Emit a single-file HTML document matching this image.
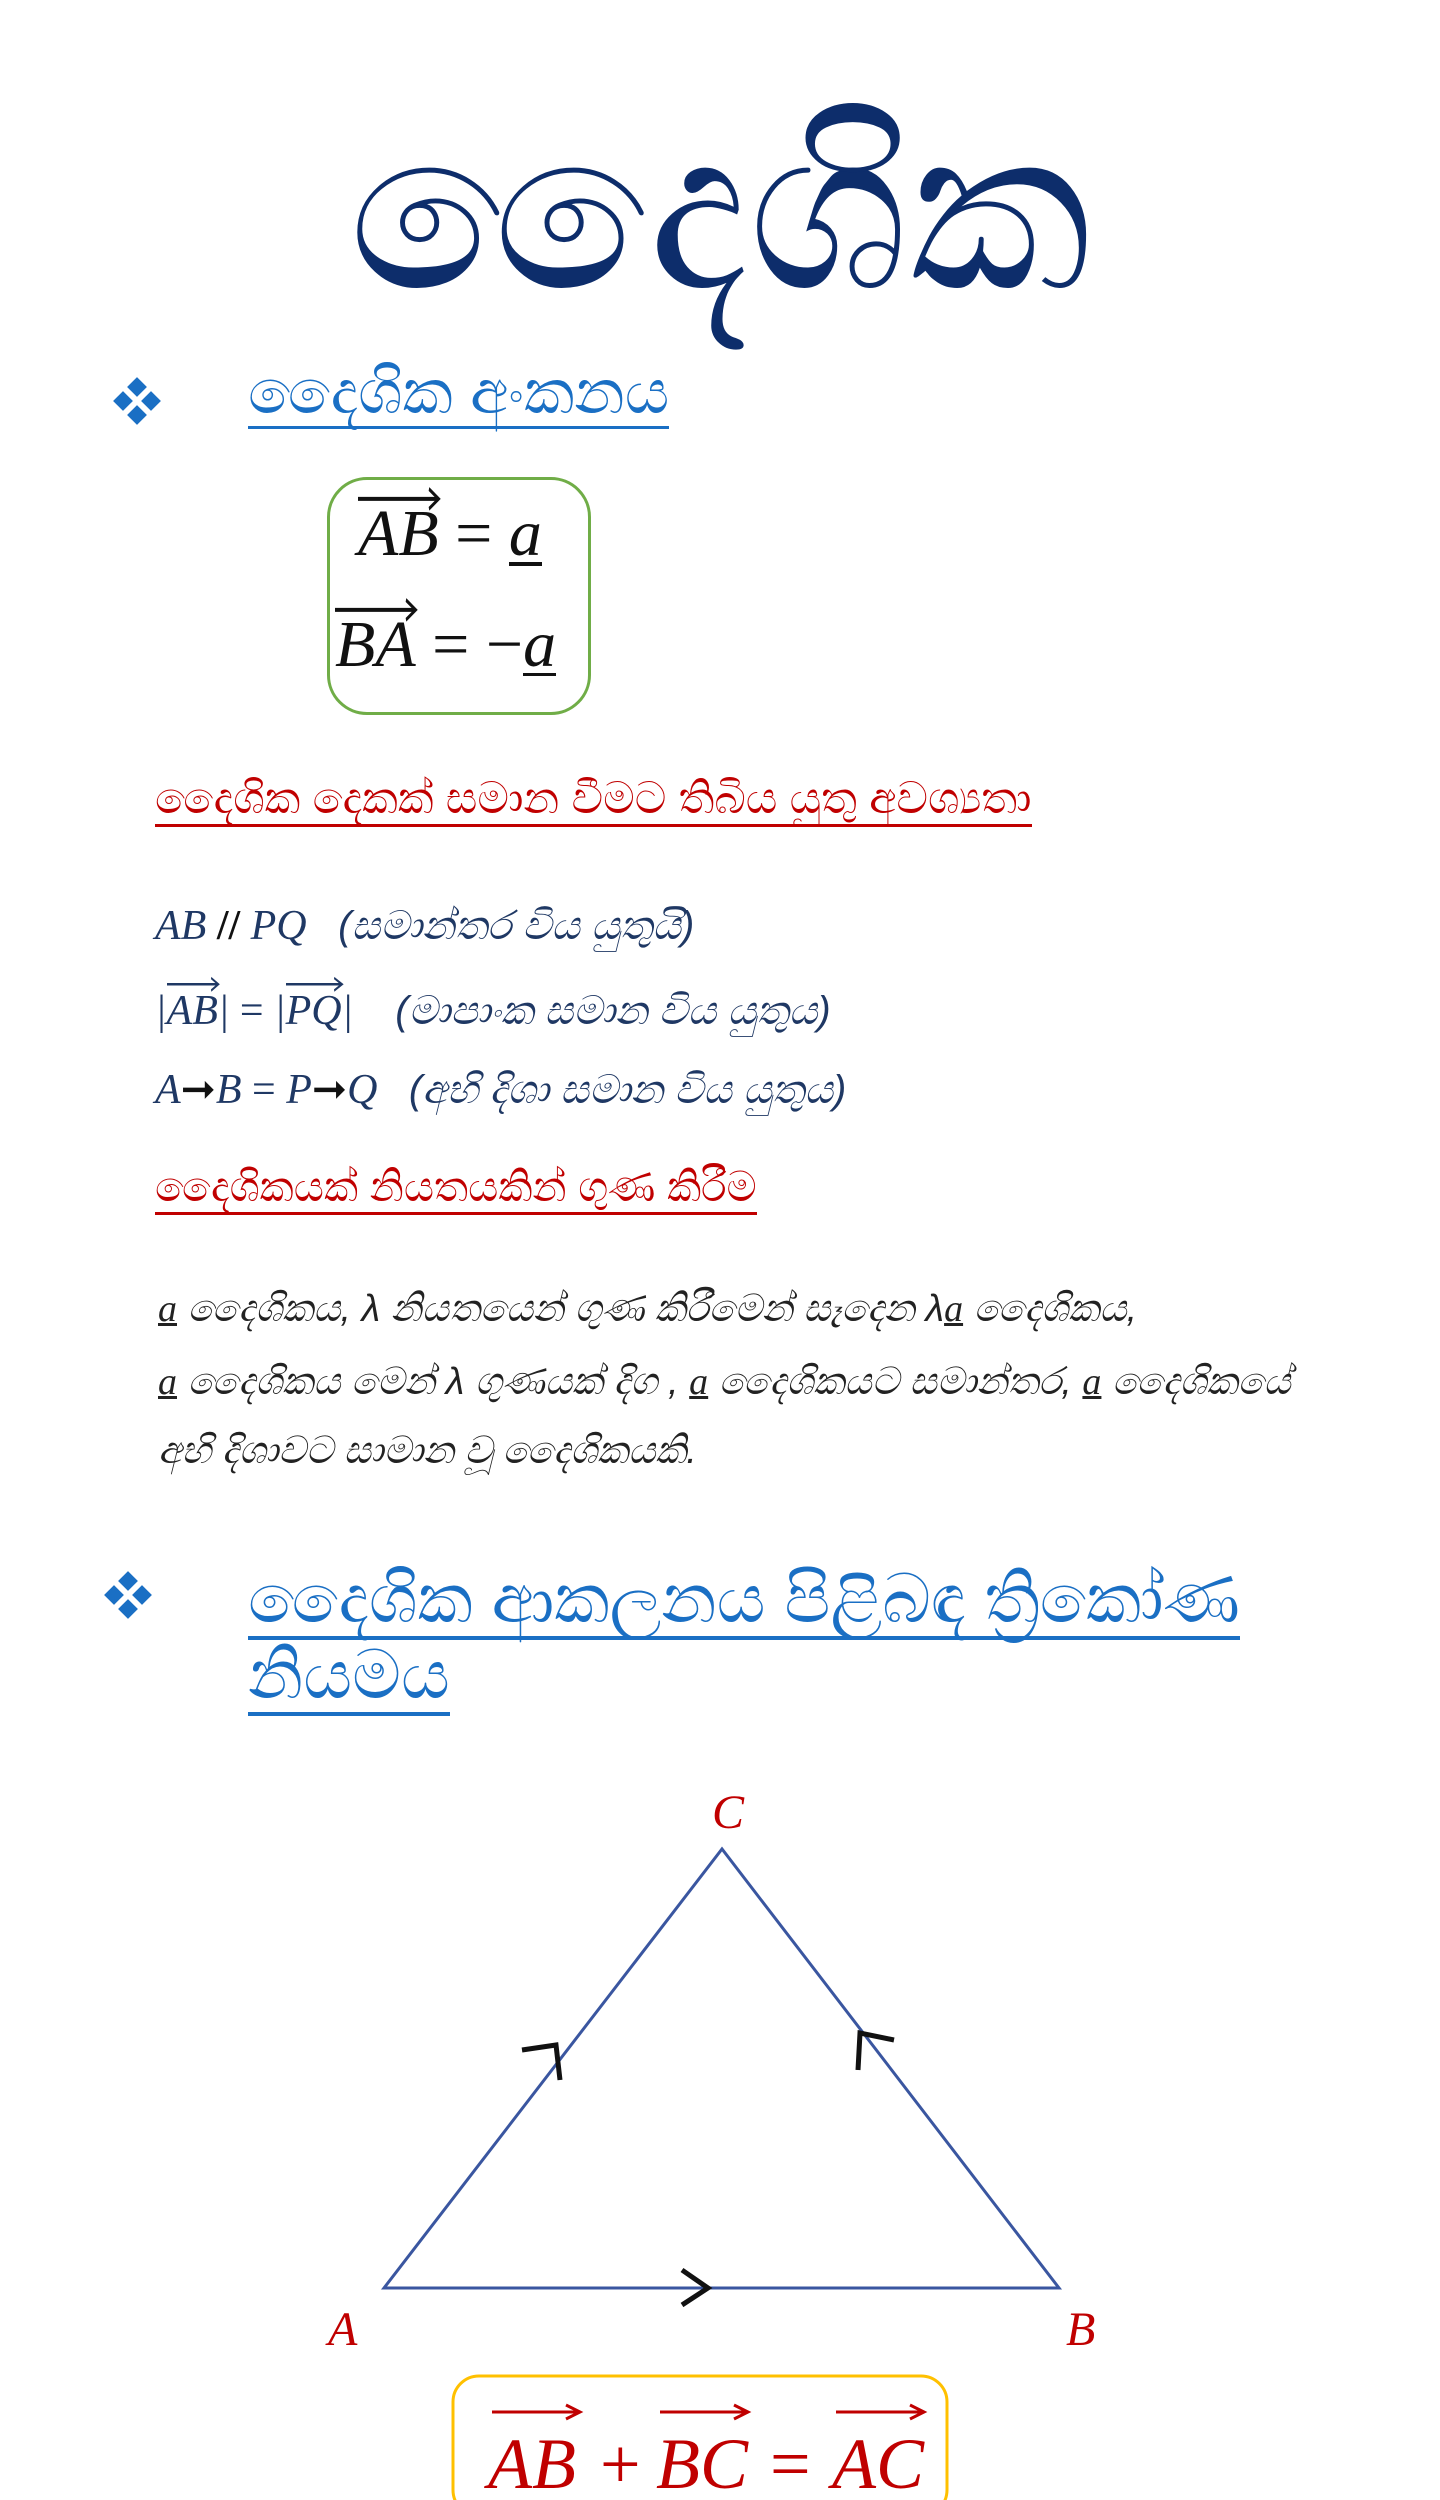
<!DOCTYPE html>
<html><head><meta charset="utf-8">
<style>
html,body{margin:0;padding:0;background:#fff;}
body{width:1440px;height:2500px;position:relative;overflow:hidden;font-family:"Liberation Serif",serif;}
.a{position:absolute;white-space:nowrap;}
.si{font-family:"Liberation Sans","Noto Sans CJK SC",sans-serif;}
.m{font-family:"Liberation Serif",serif;font-style:italic;}
.v{position:relative;display:inline-block;}
.v svg{position:absolute;left:0;top:-0.12em;width:100%;height:0.3em;overflow:visible;}
.u{text-decoration:underline;text-decoration-thickness:3px;}
.dia{position:absolute;width:48px;height:48px;}
.dia i{position:absolute;width:14px;height:14px;background:#1a6fc4;transform:rotate(45deg);}
</style></head><body>

<div class="a si" style="left:0;width:1440px;text-align:center;top:70px;font-size:225px;font-weight:normal;color:#0d2d6b;line-height:280px;">දෛශික</div>

<div class="dia" style="left:113px;top:378px;"><i style="left:17px;top:2px"></i><i style="left:3px;top:16px"></i><i style="left:31px;top:16px"></i><i style="left:17px;top:30px"></i></div>
<div class="a si" style="left:248px;top:360px;font-size:62px;color:#1a6fc4;border-bottom:3px solid #1a6fc4;line-height:66px;">දෛශික අංකනය</div>

<div class="a" style="left:327px;top:477px;width:258px;height:232px;border:3px solid #70ad47;border-radius:40px;"></div>
<div class="a m" style="left:358px;top:497px;font-size:66px;line-height:74px;color:#111;"><span class="v">AB<svg viewBox="0 0 100 10" preserveAspectRatio="none"><line x1="0" y1="5" x2="98" y2="5" stroke="#111" stroke-width="2"/><path d="M88 0 L100 5 L88 10" fill="none" stroke="#111" stroke-width="2"/></svg></span> <span style="font-style:normal">=</span> <span style="border-bottom:4px solid #111;line-height:56px;display:inline-block">a</span></div>
<div class="a m" style="left:335px;top:608px;font-size:66px;line-height:74px;color:#111;"><span class="v">BA<svg viewBox="0 0 100 10" preserveAspectRatio="none"><line x1="0" y1="5" x2="98" y2="5" stroke="#111" stroke-width="2"/><path d="M88 0 L100 5 L88 10" fill="none" stroke="#111" stroke-width="2"/></svg></span> <span style="font-style:normal">= −</span><span style="border-bottom:3px solid #111;line-height:56px;display:inline-block">a</span></div>

<div class="a si" style="left:155px;top:774px;font-size:44px;color:#c00000;border-bottom:3px solid #c00000;line-height:50px;">දෛශික දෙකක් සමාන වීමට තිබිය යුතු අවශ්‍යතා</div>

<div class="a m" style="left:155px;top:898px;font-size:42px;line-height:56px;color:#1f3864;">AB <span style="color:#111;font-style:normal;font-weight:bold">//</span> PQ &nbsp;&nbsp;<span class="si" style="font-size:40px;">(සමාන්තර විය යුතුයි)</span></div>
<div class="a m" style="left:155px;top:983px;font-size:42px;line-height:56px;color:#1f3864;">|<span class="v">AB<svg viewBox="0 0 100 10" preserveAspectRatio="none"><line x1="0" y1="5" x2="98" y2="5" stroke="#1f3864" stroke-width="2"/><path d="M86 0 L100 5 L86 10" fill="none" stroke="#1f3864" stroke-width="2"/></svg></span>| <span style="font-style:normal">=</span> |<span class="v">PQ<svg viewBox="0 0 100 10" preserveAspectRatio="none"><line x1="0" y1="5" x2="98" y2="5" stroke="#1f3864" stroke-width="2"/><path d="M86 0 L100 5 L86 10" fill="none" stroke="#1f3864" stroke-width="2"/></svg></span>| &nbsp;&nbsp;&nbsp;<span class="si" style="font-size:40px;">(මාපාංක සමාන විය යුතුය)</span></div>
<div class="a m" style="left:155px;top:1062px;font-size:42px;line-height:56px;color:#1f3864;">A<span style="font-style:normal;color:#111">➞</span>B <span style="font-style:normal">=</span> P<span style="font-style:normal;color:#111">➞</span>Q &nbsp;&nbsp;<span class="si" style="font-size:40px;">(අභි දිශා සමාන විය යුතුය)</span></div>

<div class="a si" style="left:155px;top:1162px;font-size:42px;color:#c00000;border-bottom:3px solid #c00000;line-height:50px;">දෛශිකයක් නියතයකින් ගුණ කිරීම</div>

<div class="a si" style="left:158px;top:1286px;font-size:38px;line-height:46px;color:#222;font-style:italic;"><span class="m u">a</span> දෛශිකය, λ නියතයෙන් ගුණ කිරීමෙන් සෑදෙන λ<span class="m u">a</span> දෛශිකය,</div>
<div class="a si" style="left:158px;top:1359px;font-size:38px;line-height:46px;color:#222;font-style:italic;"><span class="m u">a</span> දෛශිකය මෙන් λ ගුණයක් දිග , <span class="m u">a</span> දෛශිකයට සමාන්තර, <span class="m u">a</span> දෛශිකයේ</div>
<div class="a si" style="left:158px;top:1428px;font-size:38px;line-height:46px;color:#222;font-style:italic;">අභි දිශාවට සාමාන වූ දෛශිකයකි.</div>

<div class="dia" style="left:104px;top:1572px;"><i style="left:17px;top:2px"></i><i style="left:3px;top:16px"></i><i style="left:31px;top:16px"></i><i style="left:17px;top:30px"></i></div>
<div class="a si" style="left:248px;top:1562px;font-size:68px;color:#1a6fc4;line-height:74px;border-bottom:4px solid #1a6fc4;">දෛශික ආකලනය පිළිබඳ ත්‍රිකෝණ</div>
<div class="a si" style="left:248px;top:1638px;font-size:68px;color:#1a6fc4;line-height:74px;border-bottom:4px solid #1a6fc4;">නියමය</div>

<svg class="a" style="left:0;top:0;" width="1440" height="2500">
<path d="M384 2288 L1059 2288 L722 1849 Z" fill="none" stroke="#3a56a0" stroke-width="3"/>
<path d="M682 2270 L708 2288 L682 2305" fill="none" stroke="#111" stroke-width="5"/>
<path d="M522 2050 L556 2045 L560 2080" fill="none" stroke="#111" stroke-width="5"/>
<path d="M858 2070 L860 2033 L894 2040" fill="none" stroke="#111" stroke-width="5"/>
<text x="712" y="1828" font-family="Liberation Serif" font-style="italic" font-size="48" fill="#c00000">C</text>
<text x="328" y="2345" font-family="Liberation Serif" font-style="italic" font-size="48" fill="#c00000">A</text>
<text x="1066" y="2345" font-family="Liberation Serif" font-style="italic" font-size="48" fill="#c00000">B</text>
<rect x="453" y="2376" width="494" height="140" rx="26" fill="none" stroke="#ffc000" stroke-width="3"/>
<g stroke="#c00000" stroke-width="3" fill="none">
<line x1="492" y1="2412" x2="578" y2="2412"/><path d="M566 2405 L580 2412 L566 2419"/>
<line x1="660" y1="2412" x2="746" y2="2412"/><path d="M734 2405 L748 2412 L734 2419"/>
<line x1="836" y1="2412" x2="922" y2="2412"/><path d="M910 2405 L924 2412 L910 2419"/>
</g>
<g font-family="Liberation Serif" font-size="72" fill="#c00000">
<text x="488" y="2488" font-style="italic">AB</text>
<text x="600" y="2488">+</text>
<text x="656" y="2488" font-style="italic">BC</text>
<text x="770" y="2488">=</text>
<text x="832" y="2488" font-style="italic">AC</text>
</g>
</svg>
</body></html>
